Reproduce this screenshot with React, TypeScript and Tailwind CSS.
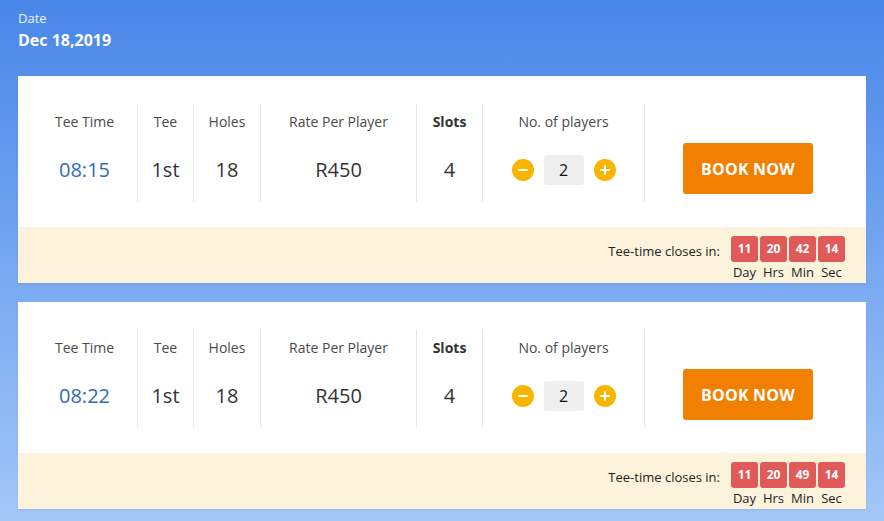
import React from "react";

type Row = { time: string; min: string };

const rows: Row[] = [
  { time: "08:15", min: "42" },
  { time: "08:22", min: "49" },
];

function Col({
  w,
  label,
  bold,
  children,
  last,
}: {
  w: string;
  label: string;
  bold?: boolean;
  children: React.ReactNode;
  last?: boolean;
}) {
  return (
    <div
      className={`${w} h-[98px] flex flex-col items-center pt-[8px] ${
        last ? "" : "border-r border-[#e6e6e6]"
      }`}
    >
      <div
        className={`text-[14px] leading-[20px] ${
          bold ? "font-bold text-[#333333]" : "text-[#4a4a4a]"
        }`}
      >
        {label}
      </div>
      <div className="mt-[24px] h-[28px] flex items-center text-[20px] leading-[28px] text-[#333333]">
        {children}
      </div>
    </div>
  );
}

function Circle({ plus }: { plus?: boolean }) {
  return (
    <svg width="22" height="22" viewBox="0 0 22 22">
      <circle cx="11" cy="11" r="11" fill="#f8b500" />
      <rect x="6" y="10" width="10" height="2" rx="1" fill="#ffffff" />
      {plus && <rect x="10" y="6" width="2" height="10" rx="1" fill="#ffffff" />}
    </svg>
  );
}

function Card({ row }: { row: Row }) {
  const units = [
    ["11", "Day"],
    ["20", "Hrs"],
    [row.min, "Min"],
    ["14", "Sec"],
  ];
  return (
    <div className="w-[848px] bg-white shadow-[0_1px_2px_rgba(0,0,0,0.08)]">
      <div className="h-[151px] flex items-start pl-[14px] pt-[28px]">
        <Col w="w-[106px]" label="Tee Time">
          <span className="text-[#2f6cb3]">{row.time}</span>
        </Col>
        <Col w="w-[56px]" label="Tee">
          1st
        </Col>
        <Col w="w-[67px]" label="Holes">
          18
        </Col>
        <Col w="w-[156px]" label="Rate Per Player">
          R450
        </Col>
        <Col w="w-[66px]" label="Slots" bold>
          4
        </Col>
        <Col w="w-[162px]" label="No. of players">
          <div className="flex items-center gap-[10px]">
            <Circle />
            <div className="w-[40px] h-[30px] rounded-[3px] bg-[#efefef] flex items-center justify-center text-[16px] text-[#111111]">
              2
            </div>
            <Circle plus />
          </div>
        </Col>
        <div className="w-[206px] h-[98px] flex justify-center pt-[39px]">
          <button className="w-[130px] h-[51px] rounded-[3px] bg-[#f28000] text-white font-bold text-[16px] tracking-[0.2px]">
            BOOK NOW
          </button>
        </div>
      </div>
      <div className="h-[56px] bg-[#fdf3dc] flex justify-end items-start pt-[9px] pr-[21px]">
        <div className="h-[26px] mt-[3px] flex items-center text-[13px] text-[#222222] mr-[11px]">
          Tee-time closes in:
        </div>
        <div className="flex gap-[2px]">
          {units.map(([v, l]) => (
            <div key={l} className="w-[27px] flex flex-col items-center">
              <div className="w-[27px] h-[26px] rounded-[3px] bg-[#e05a5a] text-white font-bold text-[12px] flex items-center justify-center">
                {v}
              </div>
              <div className="mt-[2px] text-[13px] leading-[16px] text-[#222222]">{l}</div>
            </div>
          ))}
        </div>
      </div>
    </div>
  );
}

export default function App() {
  return (
    <div
      className="w-full min-h-[521px] px-[18px] pt-[9px] bg-gradient-to-b from-[#4886e8] to-[#a3c7f7]"
      style={{ fontFamily: '"Open Sans", "Liberation Sans", sans-serif' }}
    >
      <div className="text-[13px] leading-[18px] text-[#eef4ff]">Date</div>
      <div className="mt-[2px] text-[16px] leading-[22px] font-bold text-white">Dec 18,2019</div>
      <div className="mt-[25px] flex flex-col gap-[19px]">
        {rows.map((r) => (
          <Card key={r.time} row={r} />
        ))}
      </div>
    </div>
  );
}
